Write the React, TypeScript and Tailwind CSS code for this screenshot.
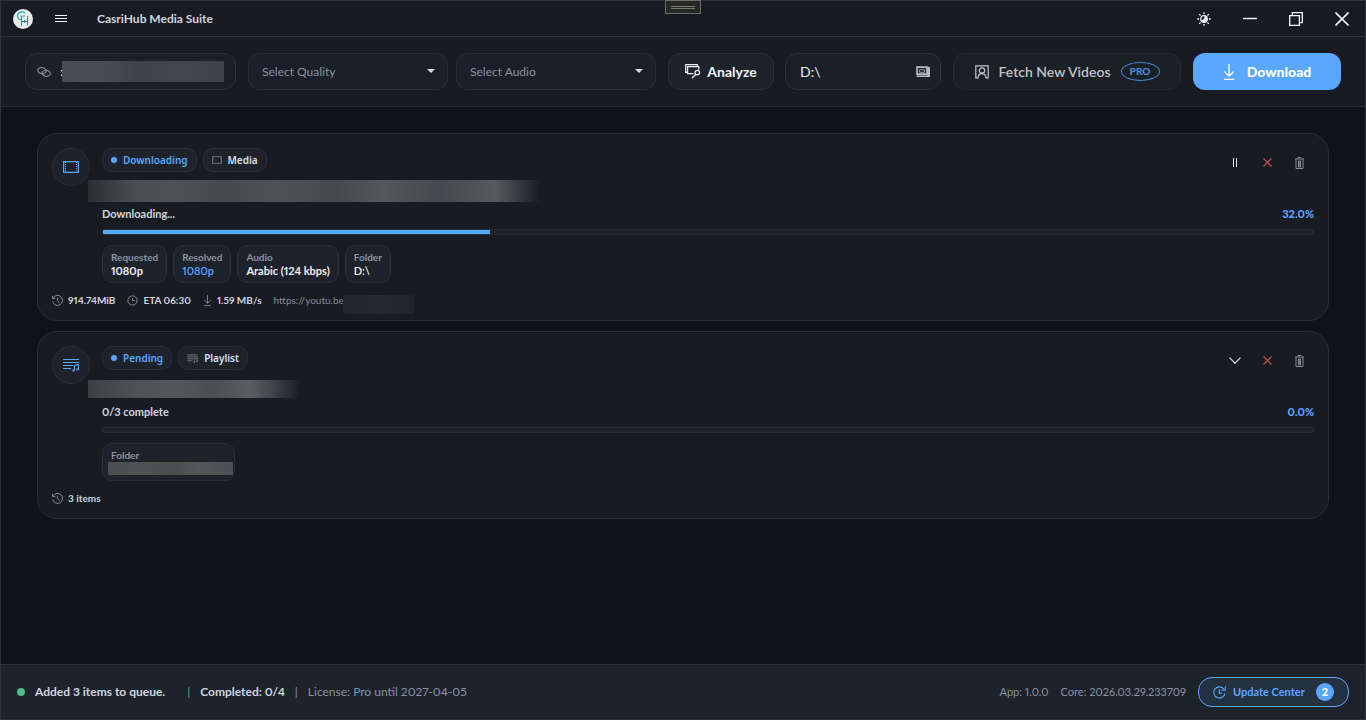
import type { ReactNode } from 'react'

type IconProps = { className?: string }

function Logo() {
  return (
    <svg viewBox="0 0 20 20" className="h-5 w-5" fill="none" aria-hidden="true">
      <circle cx="10" cy="10" r="10" fill="#e9eaec" />
      <path d="M12 4C9.500 2 4.800 2.800 4.500 6.500c-.1 2.500 1.500 4.300 4 4" stroke="#12b5b0" strokeWidth="1.200" />
      <path d="M8.500 7V16.500M8.500 12.500h6M14.500 7v9.200M11.500 11v3" stroke="#1b8fc4" />
      <path d="M8.500 7H12" stroke="#12b5b0" />
    </svg>
  )
}

function MenuIcon() {
  return (
    <svg viewBox="0 0 12 8" className="h-2 w-3" stroke="#f2f4f7" aria-hidden="true">
      <path d="M0 .5h12M0 3.500h12M0 6.500h12" />
    </svg>
  )
}

function ThemeIcon() {
  return (
    <svg viewBox="0 0 14 14" className="h-3.5 w-3.5" fill="none" stroke="#f5f7fa" aria-hidden="true">
      <circle cx="7" cy="7" r="3.300" strokeWidth="1.200" />
      <path d="M7.500 3.700C8 6.500 6.500 7.800 3.900 8.300 5 11 9.500 11 10.300 7.500 10.500 5.500 9.300 4 7.500 3.700z" fill="#f5f7fa" stroke="none" />
      <path d="M7 .3v1.800M7 11.900v1.800M.3 7h1.800M11.900 7h1.800M2.300 2.300l1.200 1.200M10.500 10.500l1.200 1.200M2.300 11.700l1.200-1.200M10.500 3.500l1.200-1.200" strokeWidth="1.300" />
    </svg>
  )
}

function MinimizeIcon() {
  return (
    <svg viewBox="0 0 14 14" className="h-3.5 w-3.5" stroke="#f5f7fa" aria-hidden="true">
      <path d="M0 6.500h14" strokeWidth="1.400" />
    </svg>
  )
}

function RestoreIcon() {
  return (
    <svg viewBox="0 0 14 14" className="h-3.5 w-3.5" fill="none" stroke="#f5f7fa" strokeWidth="1.300" aria-hidden="true">
      <path d="M.7 3.600h9.700v9.700H.7z" />
      <path d="M3.300 3.600V.7h10v10h-2.900" />
    </svg>
  )
}

function CloseIcon() {
  return (
    <svg viewBox="0 0 14 14" className="h-3.5 w-3.5" stroke="#f5f7fa" strokeWidth="1.600" aria-hidden="true">
      <path d="M.5.5l13 13M13.500.5l-13 13" />
    </svg>
  )
}

function LinkIcon() {
  return (
    <svg viewBox="0 0 14 10" className="h-2.5 w-3.5 shrink-0" fill="none" stroke="#8089a0" strokeWidth="1.200" aria-hidden="true">
      <ellipse cx="4.900" cy="3.600" rx="4.300" ry="3" transform="rotate(8 4.900 3.600)" />
      <ellipse cx="9.200" cy="6.300" rx="4.200" ry="3" transform="rotate(8 9.200 6.300)" />
    </svg>
  )
}

function AnalyzeIcon() {
  return (
    <svg viewBox="0 0 16 15" className="h-[15px] w-4" fill="none" stroke="#eef1f5" strokeWidth="1.200" aria-hidden="true">
      <path d="M2.600 8.400H.7V.7h11.600v1.800" />
      <path d="M8.500 9.600H2.600V2.600h11.200v3.200" />
      <circle cx="12.300" cy="8.600" r="2.300" />
      <path d="M10.700 10.500L7 14" strokeWidth="1.400" />
    </svg>
  )
}

function BrowseIcon() {
  return (
    <svg viewBox="0 0 14 12" className="h-3 w-3.5" fill="none" stroke="#b4bccb" aria-hidden="true">
      <path d="M1 1.200h10v7H1z" strokeWidth="1.700" />
      <path d="M.5 10.200h12.800V1M12 .8v8.800" strokeWidth="1.500" />
      <path d="M3.500 3.700h5v2.600h-5z" strokeWidth=".8" />
    </svg>
  )
}

function ContactIcon() {
  return (
    <svg viewBox="0 0 14 14" className="h-3.5 w-3.5" fill="none" stroke="#c3c6cb" strokeWidth="1.200" aria-hidden="true">
      <path d="M3 13H.8V.8h12.400V13H11" />
      <circle cx="7" cy="5.500" r="2.700" />
      <path d="M2.800 13.500c.3-3 1.700-4.800 4.200-4.800s3.900 1.800 4.200 4.800" />
    </svg>
  )
}

function DownloadIcon({ className = '' }: IconProps) {
  return (
    <svg viewBox="0 0 12 16" className={className} fill="none" stroke="currentColor" strokeWidth="1.300" aria-hidden="true">
      <path d="M6 0v12M1.300 7.500L6 12.200l4.700-4.700M1 15.300h10" />
    </svg>
  )
}

function FilmIcon({ className = '' }: IconProps) {
  return (
    <svg viewBox="0 0 16 12" className={className} fill="none" stroke="currentColor" strokeWidth="1.200" aria-hidden="true">
      <path d="M.6.600h14.800v10.800H.6z" />
      <path d="M2.500 1v10M13.500 1v10" strokeWidth="1" strokeDasharray="1 1" />
    </svg>
  )
}

function PlaylistIcon({ className = '' }: IconProps) {
  return (
    <svg viewBox="0 0 16 14" className={className} fill="none" stroke="currentColor" strokeWidth="1.200" aria-hidden="true">
      <path d="M0 1.500h16M0 4.500h16M0 7.500h10M0 10.500h8" />
      <path d="M11.500 12.500v-5l4-1v5" />
      <path d="M9.500 12.500h2M13.500 11.500h2" strokeWidth="2" />
    </svg>
  )
}

function HistoryIcon() {
  return (
    <svg viewBox="0 0 11 11" className="h-[11px] w-[11px]" fill="none" stroke="#858c9b" aria-hidden="true">
      <path d="M1.200 3A5 5 0 1 1 .7 6.500M.6.8v2.800h2.800M5.500 2.700v3l2 2" />
    </svg>
  )
}

function ClockIcon() {
  return (
    <svg viewBox="0 0 11 11" className="h-[11px] w-[11px]" fill="none" stroke="#858c9b" aria-hidden="true">
      <circle cx="5.500" cy="5.500" r="4.600" />
      <path d="M5.500 3v2.700H8" />
    </svg>
  )
}

function UpdateIcon() {
  return (
    <svg viewBox="0 0 13 13" className="h-[13px] w-[13px]" fill="none" stroke="#5aa7ff" strokeWidth="1.100" aria-hidden="true">
      <path d="M11 3.200A5.600 5.600 0 1 0 12 7.200M12.300.6v3.600H8.700M6.300 3.500v3.600h2.300" />
    </svg>
  )
}

function PauseIcon() {
  return (
    <svg viewBox="0 0 4 9" className="h-[9px] w-1" stroke="#e3e6eb" aria-hidden="true">
      <path d="M.5 0v9M3.500 0v9" />
    </svg>
  )
}

function ChevronIcon() {
  return (
    <svg viewBox="0 0 12 7" className="h-[7px] w-3" fill="none" stroke="#e3e6eb" strokeWidth="1.200" aria-hidden="true">
      <path d="M.5.700L6 6.200 11.500.7" />
    </svg>
  )
}

function CancelIcon() {
  return (
    <svg viewBox="0 0 9 9" className="h-[9px] w-[9px]" stroke="#c4504f" strokeWidth="1.100" aria-hidden="true">
      <path d="M.5.500l8 8M8.500.500l-8 8" />
    </svg>
  )
}

function TrashIcon() {
  return (
    <svg viewBox="0 0 9 12" className="h-3 w-[9px]" fill="none" stroke="#858b97" aria-hidden="true">
      <path d="M3 3.500h3v7H3z" fill="#666c78" stroke="none" />
      <path d="M0 2h9M3 1.500V.500h3v1M1 2v9.500h7V2" />
      <path d="M3.500 4v6M5.500 4v6" />
    </svg>
  )
}

function Triangle() {
  return (
    <svg viewBox="0 0 8 4" className="pointer-events-none absolute top-4 right-[13px] h-1 w-2" fill="#d7dce4" aria-hidden="true">
      <path d="M0 0h8L4 4z" />
    </svg>
  )
}

function Picker({ label, option }: { label: string; option: string }) {
  return (
    <div className="relative w-[200px]">
      <select
        aria-label={label}
        className="h-[37px] w-full appearance-none rounded-xl border border-[#282e39] bg-[#1b1f27] px-[13px] text-xs text-[#8991a3] outline-none"
      >
        <option>{option}</option>
      </select>
      <Triangle />
    </div>
  )
}

function Pill({ children }: { children: ReactNode }) {
  return (
    <span className="flex h-6 items-center gap-1.5 rounded-[10px] border border-[#292f39] bg-[#1e222a] px-2 font-['Noto_Sans',sans-serif] text-[10px] font-semibold">
      {children}
    </span>
  )
}

function Chip({ label, children }: { label: string; children: ReactNode }) {
  return (
    <div className="flex h-[38px] flex-col justify-center rounded-[10px] border border-[#292f39] bg-[#1e222a] px-2 text-[11px] leading-[13px] text-[#8b92a2]">
      <span className="text-[10px] font-bold">{label}</span>
      {children}
    </div>
  )
}

function Action({ label, children }: { label: string; children: ReactNode }) {
  return (
    <button type="button" aria-label={label} className="flex h-[29px] w-8 items-center justify-center">
      {children}
    </button>
  )
}

type CardProps = {
  icon: ReactNode
  state: string
  kind: string
  kindIcon: ReactNode
  firstAction: ReactNode
  title: ReactNode
  status: string
  percent: number
  chips: ReactNode
  meta: ReactNode
}

function JobCard({ icon, state, kind, kindIcon, firstAction, title, status, percent, chips, meta }: CardProps) {
  return (
    <article className="rounded-[20px] border border-[#282e38] bg-[#181b22] p-3.5 pb-[13px]">
      <div className="flex gap-3">
        <div className="flex h-[38px] w-[38px] shrink-0 items-center justify-center rounded-full border border-[#292f39] bg-[#1e222a] text-[#5aa7ff]">
          {icon}
        </div>
        <div className="min-w-0 flex-1">
          <div className="flex h-6 justify-between">
            <div className="flex gap-1.5">
              <Pill>
                <span className="h-1.5 w-1.5 rounded-full bg-[#5aa7ff]" />
                <span className="text-[#5aa7ff]">{state}</span>
              </Pill>
              <Pill>
                <span className="text-[#858b97]">{kindIcon}</span>
                <span className="text-[#dde1e9]">{kind}</span>
              </Pill>
            </div>
            <div className="-mr-px flex">
              {firstAction}
              <Action label="Cancel"><CancelIcon /></Action>
              <Action label="Delete"><TrashIcon /></Action>
            </div>
          </div>
          <div className="-ml-3.5 mt-2 flex h-[22px] items-center">{title}</div>
          <div className="mt-1 flex justify-between text-[11px] leading-4">
            <span className="font-bold text-[#d0d5df]">{status}</span>
            <span className="font-black text-[#5aa7ff]">{percent.toFixed(1)}%</span>
          </div>
          <div
            role="progressbar"
            aria-label={status}
            aria-valuenow={percent}
            className="mt-[7px] flex h-1.5 items-center rounded-[3px] border border-[#292e37] bg-[#1e222a]"
          >
            <div className="h-1 bg-[#5aa7ff]" style={{ width: `${percent}%` }} />
          </div>
          <div className="mt-2.5 flex gap-1.5">{chips}</div>
        </div>
      </div>
      <div className="mt-2.5 flex items-center gap-3 text-[10px] leading-[14px] font-bold text-[#d0d5df]">{meta}</div>
    </article>
  )
}

function Meta({ icon, children }: { icon: ReactNode; children: ReactNode }) {
  return (
    <span className="flex items-center gap-[5px]">
      {icon}
      {children}
    </span>
  )
}

export default function App() {
  return (
    <div className="relative flex min-h-screen flex-col border border-[#2b333e] bg-[#111217] font-[Lato,sans-serif] text-[#d0d5df] proportional-nums">
      <div className="absolute -top-px left-1/2 flex h-[14px] w-9 -translate-x-1/2 flex-col items-center justify-center gap-px border border-[#6d6e6c] bg-[#272926]">
        <span className="h-px w-6 bg-[#777876]" />
        <span className="h-px w-6 bg-[#777876]" />
      </div>

      <header className="flex h-9 items-center border-b border-[#2b333e] bg-[#181b22] pl-3">
        <Logo />
        <button type="button" aria-label="Menu" className="ml-[22px]"><MenuIcon /></button>
        <h1 className="ml-7 flex-1 pl-0.5 text-xs font-bold">CasriHub Media Suite</h1>
        <div className="flex">
          <button type="button" aria-label="Theme" className="flex h-9 w-[46px] items-center justify-center"><ThemeIcon /></button>
          <button type="button" aria-label="Minimize" className="flex h-9 w-[46px] items-center justify-center"><MinimizeIcon /></button>
          <button type="button" aria-label="Restore" className="flex h-9 w-[46px] items-center justify-center"><RestoreIcon /></button>
          <button type="button" aria-label="Close" className="flex h-9 w-[46px] items-center justify-center"><CloseIcon /></button>
        </div>
      </header>

      <section className="flex items-center gap-3 border-b border-[#262b34] bg-[#181b22] px-6 py-4">
        <label className="relative flex h-[37px] min-w-0 flex-1 items-center gap-[9px] rounded-xl border border-[#2b323e] bg-[#1b1f27] px-[11px]">
          <LinkIcon />
          <input aria-label="Video link" defaultValue=":" className="min-w-0 flex-1 bg-transparent text-xs text-[#eef1f5] outline-none" />
          <span className="absolute inset-y-[7px] right-[11px] left-9 bg-[linear-gradient(90deg,#494b50,#4a4d52_22%,#404247_48%,#44464b_75%,#3f4146)]" />
        </label>
        <div className="flex gap-2">
          <Picker label="Quality" option="Select Quality" />
          <Picker label="Audio" option="Select Audio" />
        </div>
        <div className="flex gap-[11px]">
          <button type="button" className="flex h-[37px] w-[106px] items-center justify-center gap-1.5 rounded-xl border border-[#2a303b] bg-[#1e222a] text-sm font-bold text-[#f2f4f8]">
            <AnalyzeIcon />
            Analyze
          </button>
          <div className="flex h-[37px] w-[156px] items-center rounded-xl border border-[#2b323e] bg-[#1b1f27] pr-2.5 pl-3.5">
            <input aria-label="Destination folder" defaultValue="D:\" className="min-w-0 flex-1 bg-transparent text-sm text-[#eef1f5] outline-none" />
            <button type="button" aria-label="Browse"><BrowseIcon /></button>
          </div>
        </div>
        <button type="button" className="flex h-[37px] w-[228px] items-center justify-center gap-2.5 rounded-xl border border-[#262b34] bg-[#1b1f26] text-sm font-semibold text-[#c0c3c9]">
          <ContactIcon />
          Fetch New Videos
          <span className="flex h-[19px] w-[39px] items-center justify-center rounded-[50%] border border-[#4583c8] text-[10px] font-black text-[#4c8fd9]">PRO</span>
        </button>
        <button type="button" className="flex h-[37px] w-[148px] items-center justify-center gap-3 rounded-xl bg-[#5aa7ff] text-sm font-black text-white">
          <DownloadIcon className="h-4 w-3" />
          Download
        </button>
      </section>

      <main className="flex flex-1 flex-col gap-2.5 px-9 pt-[26px] pb-6">
        <JobCard
          icon={<FilmIcon className="h-3 w-4" />}
          state="Downloading"
          kind="Media"
          kindIcon={<FilmIcon className="h-2 w-2.5" />}
          firstAction={<Action label="Pause"><PauseIcon /></Action>}
          title={<span className="h-[22px] w-[453px] bg-[linear-gradient(90deg,#2d2e31,#4b4c4f_10%,#515255_18%,#48494d_30%,#515255_42%,#46484c_55%,#56575a_65%,#46484d_78%,#57595c_90%,#181b22)]" />}
          status="Downloading..."
          percent={32}
          chips={
            <>
              <Chip label="Requested"><span className="font-bold text-[#eef1f5]">1080p</span></Chip>
              <Chip label="Resolved"><span className="font-semibold text-[#5aa7ff]">1080p</span></Chip>
              <Chip label="Audio"><span className="font-bold text-[#eef1f5]">Arabic (124 kbps)</span></Chip>
              <Chip label="Folder"><span className="font-semibold text-[#eef1f5]">D:\</span></Chip>
            </>
          }
          meta={
            <>
              <Meta icon={<HistoryIcon />}>914.74MiB</Meta>
              <Meta icon={<ClockIcon />}>ETA 06:30</Meta>
              <Meta icon={<DownloadIcon className="h-[11px] w-[9px] text-[#858c9b]" />}>1.59 MB/s</Meta>
              <span className="relative w-[140px] font-normal text-[#858c9b]">
                https://youtu.be
                <span className="absolute top-0.5 right-0 h-[19px] w-[71px] bg-[linear-gradient(90deg,#22252c,#252930_50%,#20242b)]" />
              </span>
            </>
          }
        />
        <JobCard
          icon={<PlaylistIcon className="h-3.5 w-4" />}
          state="Pending"
          kind="Playlist"
          kindIcon={<PlaylistIcon className="h-[9px] w-[11px]" />}
          firstAction={<Action label="Expand"><ChevronIcon /></Action>}
          title={<span className="h-[18px] w-[213px] bg-[linear-gradient(90deg,#3e3f42,#505154_22%,#56575a_42%,#4c4e52_58%,#5a5d60_76%,#43464a_86%,#181b22)]" />}
          status="0/3 complete"
          percent={0}
          chips={<Chip label="Folder"><span className="-mr-[7px] -ml-[3px] h-[13px] w-[125px] bg-[linear-gradient(90deg,#4c4e52,#505256_30%,#4a4c50_55%,#55575b_72%,#4c4e53)]" /></Chip>}
          meta={<Meta icon={<HistoryIcon />}>3 items</Meta>}
        />
      </main>

      <footer className="flex h-[55px] items-center border-t border-[#2b333e] bg-[#1e222a] px-4 text-xs">
        <span className="mr-2.5 h-2 w-2 rounded-full bg-[#48bf84]" />
        <span className="font-bold">Added 3 items to queue.</span>
        <span className="mr-2.5 ml-[22px] text-[#8b92a2]">|</span>
        <span className="font-bold">Completed: 0/4</span>
        <span className="mx-2.5 text-[#8b92a2]">|</span>
        <span className="flex-1 text-[#8b92a2]">License: Pro until 2027-04-05</span>
        <span className="mr-3 text-[11px] text-[#8b92a2]">App: 1.0.0</span>
        <span className="mr-3 text-[11px] text-[#8b92a2]">Core: 2026.03.29.233709</span>
        <button type="button" className="flex h-[30px] w-[151px] items-center rounded-[14px] border border-[#5aa7ff] bg-[#243140] px-3.5 text-[11px] font-bold text-[#5aa7ff]">
          <UpdateIcon />
          <span className="ml-[7px] flex-1 text-left">Update Center</span>
          <span className="flex h-[18px] w-[18px] items-center justify-center rounded-full bg-[#5aa7ff] font-black text-white">2</span>
        </button>
      </footer>
    </div>
  )
}
